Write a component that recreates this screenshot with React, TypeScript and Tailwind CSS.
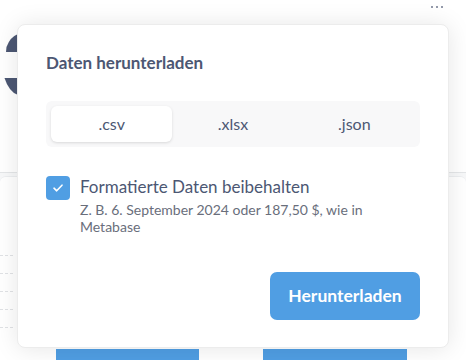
import React from "react";

export default function App() {
  const font = { fontFamily: "Lato, 'Noto Sans', sans-serif" };
  return (
    <div className="relative w-[466px] h-[360px] overflow-hidden bg-[#f7f8f9]" style={font}>
      {/* background dashboard */}
      <div className="flex flex-col h-full">
        <div className="h-[173px] bg-white border-b border-[#e4e6e8]" />
        <div className="h-[3px]" />
        <div className="flex-1 bg-white border-t border-[#eceef0] rounded-t-[6px] flex flex-col">
          <div className="flex flex-col gap-[17px] pt-[78px] pl-0">
            <div className="w-[13px] border-t border-dashed border-[#e0e2e5]" />
            <div className="w-[13px] border-t border-dashed border-[#e0e2e5]" />
            <div className="w-[13px] border-t border-dashed border-[#e0e2e5]" />
            <div className="w-[13px] border-t border-dashed border-[#e0e2e5]" />
            <div className="w-[13px] border-t border-dashed border-[#e0e2e5]" />
          </div>
          <div className="mt-auto flex pl-[56px] gap-[64px] h-[11px]">
            <div className="w-[143px] bg-[#509ee3]" />
            <div className="w-[144px] bg-[#509ee3]" />
          </div>
        </div>
      </div>

      {/* donut chart fragment */}
      <svg className="absolute left-0 top-0" width="20" height="100" viewBox="0 0 20 100">
        <path d="M18 34 Q10 37 6.5 47 L6 52 L18 52 Z" fill="#4c5773" />
        <path d="M4.5 78 L18 78 L18 95 Q9 92 4.5 78 Z" fill="#4c5773" />
      </svg>

      {/* more dots */}
      <div className="absolute left-[431px] top-[6px] flex gap-[3px]">
        <div className="w-[2px] h-[2px] bg-[#949aab]" />
        <div className="w-[2px] h-[2px] bg-[#949aab]" />
        <div className="w-[2px] h-[2px] bg-[#949aab]" />
      </div>

      {/* popover */}
      <div className="absolute left-[17px] top-[24px] w-[432px] h-[324px] bg-white rounded-[8px] border border-[#ececec] shadow-[0_1px_24px_rgba(0,0,0,0.10)] flex flex-col px-[28px] pt-[26px] pb-[27px]">
        <div className="text-[17px] leading-[24px] font-bold text-[#4c5773]">Daten herunterladen</div>

        <div className="mt-[26px] grid grid-cols-3 p-[5px] bg-[#f8f8f9] rounded-[6px]">
          <div className="h-[36px] flex items-center justify-center bg-white rounded-[6px] shadow-[0_1px_3px_rgba(0,0,0,0.13)] text-[16px] text-[#4c5773]">.csv</div>
          <div className="h-[36px] flex items-center justify-center text-[16px] text-[#4c5773]">.xlsx</div>
          <div className="h-[36px] flex items-center justify-center text-[16px] text-[#4c5773]">.json</div>
        </div>

        <div className="mt-[29px] flex gap-[10px]">
          <div className="w-[24px] h-[24px] shrink-0 rounded-[4px] bg-[#509ee3] flex items-center justify-center">
            <svg width="12" height="10" viewBox="0 0 12 10" fill="none">
              <path d="M2 5.2 L4.7 7.8 L10 2.2" stroke="white" strokeWidth="1.6" strokeLinecap="round" strokeLinejoin="round" />
            </svg>
          </div>
          <div className="flex flex-col">
            <div className="text-[17px] leading-[21px] text-[#4c5773]">Formatierte Daten beibehalten</div>
            <div className="mt-[4px] text-[14px] leading-[17px] text-[#696e7b]">
              Z. B. 6. September 2024 oder 187,50 $, wie in Metabase
            </div>
          </div>
        </div>

        <div className="mt-auto flex justify-end">
          <button className="w-[150px] h-[48px] rounded-[7px] bg-[#509ee3] text-white text-[17.5px] font-bold">
            Herunterladen
          </button>
        </div>
      </div>
    </div>
  );
}
